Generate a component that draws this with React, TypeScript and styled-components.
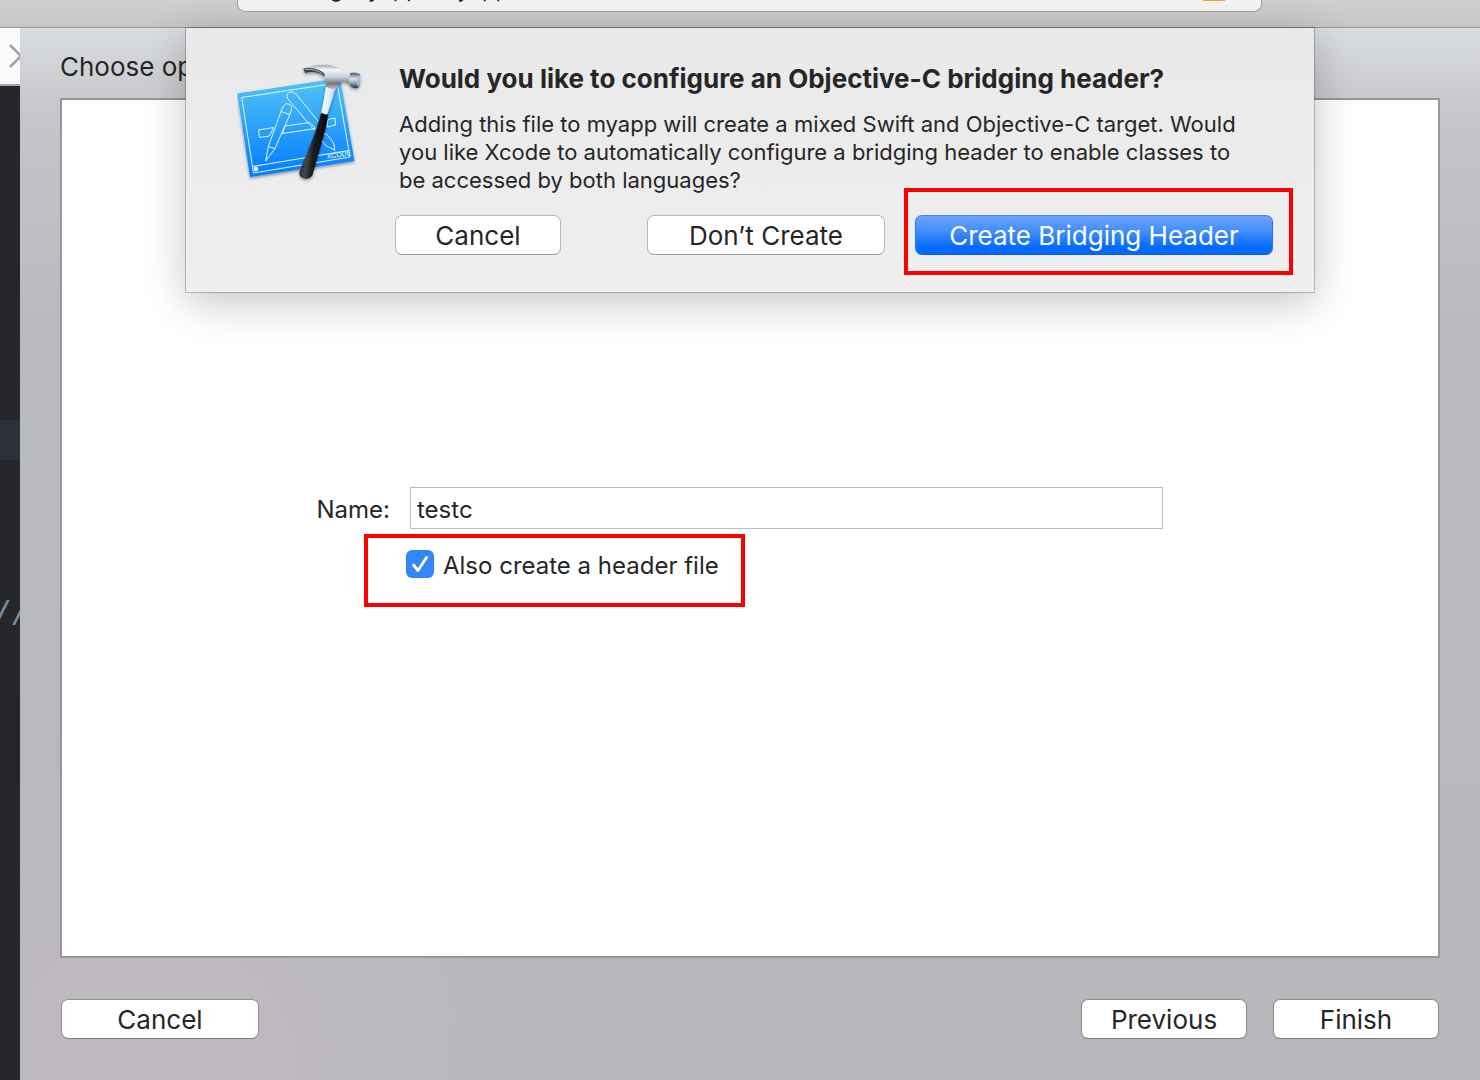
import React, { useId } from "react";
import styled, { createGlobalStyle, css } from "styled-components";

const Global = createGlobalStyle`
  *, *::before, *::after { box-sizing: border-box; }
  body { margin: 0; background: #26272d; }
  body, button, input { font-family: Inter, "Liberation Sans", sans-serif; color: #262626; }
`;

const Page = styled.div`
  display: flex;
  flex-direction: column;
  min-height: 100vh;
  overflow: hidden;
`;

const Toolbar = styled.header`
  display: flex;
  justify-content: center;
  align-items: flex-start;
  height: 28px;
  padding: 0 218px 0 237px;
  background: linear-gradient(#cfcfcf, #c6c6c6);
  border-bottom: 1px solid #979797;
`;

const Status = styled.div`
  display: flex;
  justify-content: space-between;
  align-items: flex-end;
  flex: 1;
  height: 12px;
  padding: 0 36px 6px 20px;
  overflow: hidden;
  background: #f4f4f4;
  border: 1px solid #a0a0a0;
  border-top: 0;
  border-radius: 0 0 8px 8px;
`;

const StatusText = styled.span`
  font-size: 22px;
  line-height: 32px;
  white-space: nowrap;
`;

const Warning = styled.span`
  align-self: flex-start;
  width: 22px;
  height: 1px;
  background: #ffa51f;
`;

const Workspace = styled.div`
  display: flex;
  flex: 1;
`;

const Gutter = styled.aside`
  display: flex;
  flex-direction: column;
  width: 20px;
  overflow: hidden;
  background: #26272d;
`;

const JumpBar = styled.div`
  display: flex;
  align-items: center;
  height: 58px;
  padding-left: 8px;
  background: #fafafa;
  border-bottom: 2px solid #a9a9a9;
  svg { flex: none; }
`;

const CurrentLine = styled.div`
  height: 40px;
  margin-top: 334px;
  background: #2d313b;
`;

const Code = styled.code`
  margin-top: 132px;
  margin-left: -6px;
  font: italic 30px/40px "DejaVu Sans Mono", monospace;
  color: #7f8c98;
`;

const Sheet = styled.main`
  position: relative;
  display: flex;
  flex-direction: column;
  flex: 1;
  min-width: 0;
  padding: 20px 40px 41px;
  background:
    radial-gradient(circle at 9% 100%, #c1bac0, transparent 340px),
    linear-gradient(#d9dce0 0, #c4c5c9 90px, #b9babe 300px, #b7b7bb 100%);
`;

const Heading = styled.h1`
  margin: 0 0 12px;
  font-size: 26px;
  line-height: 38px;
  font-weight: 400;
`;

const Panel = styled.section`
  flex: 1;
  padding: 387px 275px 40px 0;
  background: #fff;
  border: 2px solid #989898;
`;

const Field = styled.div`
  display: grid;
  grid-template-columns: 328px 1fr;
  column-gap: 20px;
  align-items: center;
`;

const FieldLabel = styled.label`
  padding-top: 4px;
  text-align: right;
  font-size: 24px;
  line-height: 30px;
`;

const TextInput = styled.input`
  width: 100%;
  height: 42px;
  padding: 3px 6px 0;
  font-size: 24px;
  border: 1px solid #bdbdbd;
  border-radius: 0;
  background: #fff;
  outline: none;
`;

const frame = css`
  border: 4px solid #ff0000;
`;

const CheckRow = styled.div`
  ${frame}
  display: flex;
  align-items: flex-start;
  width: 381px;
  height: 73px;
  margin: 5px 0 0 302px;
  padding: 12px 0 0 38px;
  gap: 9px;
`;

const Check = styled.span`
  display: grid;
  width: 28px;
  height: 28px;
  > * { grid-area: 1 / 1; }
  svg { pointer-events: none; }
`;

const CheckInput = styled.input`
  appearance: none;
  width: 28px;
  height: 28px;
  margin: 0;
  border-radius: 6px;
  background: #b8b8b8;
  &:checked { background: #3486f7; }
`;

const CheckLabel = styled.label`
  font-size: 24px;
  line-height: 32px;
`;

const Footer = styled.footer`
  display: flex;
  gap: 26px;
  padding: 41px 1px 0;
`;

const Button = styled.button<{ $width: number; $primary?: boolean; $push?: boolean }>`
  width: ${(p) => p.$width}px;
  height: 40px;
  margin: 0 ${(p) => (p.$push ? "auto" : "0")} 0 0;
  padding: 2px 0 0;
  font-size: 26px;
  line-height: 32px;
  white-space: nowrap;
  border: 1px solid #00000038;
  border-bottom-color: #00000058;
  border-radius: 7px;
  background: #fff;
  background-clip: padding-box;
  ${(p) =>
    p.$primary &&
    css`
      color: #fff;
      background: linear-gradient(#6ba6fa, #3d8afb 45%, #0069ff 85%);
      border-color: #3d86ef #1f74f4 #0a5fe0;
    `}
`;

const Alert = styled.div`
  position: absolute;
  top: 0;
  left: 50%;
  transform: translateX(-50%);
  display: grid;
  grid-template-columns: 124px 1fr;
  column-gap: 38px;
  width: 1128px;
  height: 264px;
  padding: 32px 21px 0 51px;
  background: linear-gradient(#e9e9e9, #efefef);
  box-shadow: 0 0 0 1px #00000038, 0 10px 40px #0000003c;
`;

const AlertTitle = styled.h2`
  margin: 0;
  font-size: 26px;
  line-height: 38px;
  font-weight: 700;
`;

const AlertText = styled.p`
  width: 860px;
  margin: 12px 0 0;
  font-size: 22px;
  line-height: 28px;
`;

const Actions = styled.div`
  display: flex;
  align-items: baseline;
  margin-top: -6px;
  margin-left: -4px;
`;

const Callout = styled.div`
  ${frame}
  display: flex;
  margin: 0 0 0 19px;
  padding: 23px 16px 16px 7px;
`;

const XcodeIcon = () => (
  <svg width="144" height="134" viewBox="0 0 144 134" aria-label="Xcode" role="img">
    <defs>
      <linearGradient id="sheet" x1="0" y1="0" x2="0" y2="1">
        <stop offset="0" stopColor="#54c4f5" />
        <stop offset="1" stopColor="#007cff" />
      </linearGradient>
      <linearGradient id="steel" x1="0" y1="0" x2="1" y2=".2">
        <stop offset="0" stopColor="#8b98a5" />
        <stop offset=".3" stopColor="#f6fbff" />
        <stop offset=".65" stopColor="#d3e3f0" />
        <stop offset="1" stopColor="#59636d" />
      </linearGradient>
      <linearGradient id="head" x1="0" y1="0" x2="0" y2="1">
        <stop offset="0" stopColor="#9aa6b1" />
        <stop offset=".2" stopColor="#f2f7fb" />
        <stop offset=".5" stopColor="#c3d0db" />
        <stop offset=".75" stopColor="#7b6f6d" />
        <stop offset="1" stopColor="#c9d8e4" />
      </linearGradient>
      <linearGradient id="face" x1="0" y1="0" x2="0" y2="1">
        <stop offset="0" stopColor="#4d555c" />
        <stop offset=".4" stopColor="#dce7ef" />
        <stop offset=".7" stopColor="#7f9bb0" />
        <stop offset="1" stopColor="#26292c" />
      </linearGradient>
      <linearGradient id="grip" x1="0" y1="0" x2="1" y2=".25">
        <stop offset="0" stopColor="#0d0f11" />
        <stop offset=".4" stopColor="#44484b" />
        <stop offset=".6" stopColor="#1b1d1f" />
        <stop offset="1" stopColor="#050505" />
      </linearGradient>
      <filter id="drop" x="-20%" y="-20%" width="140%" height="140%">
        <feDropShadow dx="0" dy="1.5" stdDeviation="1.5" floodOpacity=".4" />
      </filter>
    </defs>
    <path d="M.3 33.500 L103 18 L117.500 101 L13 117Z" fill="url(#sheet)" filter="url(#drop)" />
    <g fill="none" stroke="#e4f5ff" strokeWidth="1" strokeLinejoin="round">
      <path d="M4.700 37.500 L100 23 L113 97 L16.500 113Z M15.500 106.500 L111.500 90.500" />
      <path d="M21.500 70 L36.500 67.500 L32.500 76 L22.500 77.500Z M48 66 L73 62.500 L78.500 68.500 L45.500 73.500Z M91 59.500 L98 58 L98.500 65 L90 67Z" />
      <path d="M44 51.500 L46.500 46 Q48.500 42.500 52 44 Q55.500 45.500 54.500 49 L53 54 L38 88.500 L28.700 101 L31.300 86.500Z M44 51.500 L53 54.500 M31.300 86.500 L38 88.500" />
      <path d="M77 70 L51 39 Q48 34.500 52 32.500 Q56 30.500 59 34 L81 61 M86 74 Q90 73 92 77 Q98 83 97.500 89 Q97 92 98 90 L97.500 89.500 Q88 87 84.500 80" />
    </g>
    <text x="90" y="99" transform="rotate(-9 90 99)" fontFamily="Inter" fontSize="7" fontWeight="500" fill="#dff2ff">XCODE</text>
    <circle cx="19" cy="109" r="2.200" fill="#fff" />
    <g filter="url(#drop)">
      <path d="M89.500 20 L103 20 Q99.500 26 98 31 L90 55 L83.500 54 Q88 38 89.500 20Z" fill="url(#steel)" />
      <path d="M66.300 8.500 Q75 5 90 4.700 Q99 5.500 105.500 11 Q108.500 14.500 112.500 14 L112 23.500 Q106.500 20.500 102.500 22.500 L98 30 L88.500 27 Q91 21 86 15.500 Q80 10.500 73 11.500 L68 13Z" fill="url(#head)" />
      <path d="M66.300 8.500 Q78 6.500 87 13 L88 17 Q80 10 68 13Z" fill="#3b3f45" />
      <path d="M68 9.500 Q78 8.500 86 14" fill="none" stroke="#c5ced6" strokeWidth=".8" />
      <path d="M113 13 Q118 12 123 14 Q124 21 121.500 27.500 Q118 29 114.500 27 L111 23 Q113.500 18 113 13Z" fill="url(#face)" />
      <path d="M121.500 14.500 Q124.500 21 120.500 27.500 Q119.500 20 121.500 14.500Z" fill="#a9b8c4" />
      <path d="M84.300 52.500 Q87.500 55 91 54.500 Q90 64 86.500 76 L75.500 115 Q73 119.500 67 118.500 Q61.500 117 62.500 111.500 L78.500 72 Q82 62 84.300 52.500Z" fill="url(#grip)" />
    </g>
  </svg>
);

export default function App() {
  const nameId = useId();
  const headerId = useId();
  const titleId = useId();
  return (
    <Page>
      <Global />
      <Toolbar>
        <Status>
          <StatusText>Running myapp : myapp</StatusText>
          <Warning />
        </Status>
      </Toolbar>
      <Workspace>
        <Gutter>
          <JumpBar>
            <svg width="14" height="26" viewBox="0 0 14 26" fill="none" stroke="#a0a0a0" strokeWidth="2.500">
              <path d="M2 2 L13 13 L2 24" />
            </svg>
          </JumpBar>
          <CurrentLine />
          <Code>//</Code>
        </Gutter>
        <Sheet>
          <Heading>Choose options for your new file:</Heading>
          <Panel>
            <Field>
              <FieldLabel htmlFor={nameId}>Name:</FieldLabel>
              <TextInput id={nameId} type="text" defaultValue="testc" />
            </Field>
            <CheckRow>
              <Check>
                <CheckInput id={headerId} type="checkbox" defaultChecked />
                <svg width="28" height="28" viewBox="0 0 28 28" fill="none" stroke="#fff" strokeWidth="2.800" strokeLinecap="round" strokeLinejoin="round">
                  <path d="M7.500 15 L12 20.500 L20.500 7.500" />
                </svg>
              </Check>
              <CheckLabel htmlFor={headerId}>Also create a header file</CheckLabel>
            </CheckRow>
          </Panel>
          <Footer>
            <Button $width={198} $push>Cancel</Button>
            <Button $width={166}>Previous</Button>
            <Button $width={166}>Finish</Button>
          </Footer>
          <Alert role="alertdialog" aria-labelledby={titleId}>
            <XcodeIcon />
            <div>
              <AlertTitle id={titleId}>Would you like to configure an Objective-C bridging header?</AlertTitle>
              <AlertText>
                Adding this file to myapp will create a mixed Swift and Objective-C target. Would you like Xcode to
                automatically configure a bridging header to enable classes to be accessed by both languages?
              </AlertText>
              <Actions>
                <Button $width={166} $push>Cancel</Button>
                <Button $width={238}>Don’t Create</Button>
                <Callout>
                  <Button $width={358} $primary>Create Bridging Header</Button>
                </Callout>
              </Actions>
            </div>
          </Alert>
        </Sheet>
      </Workspace>
    </Page>
  );
}
